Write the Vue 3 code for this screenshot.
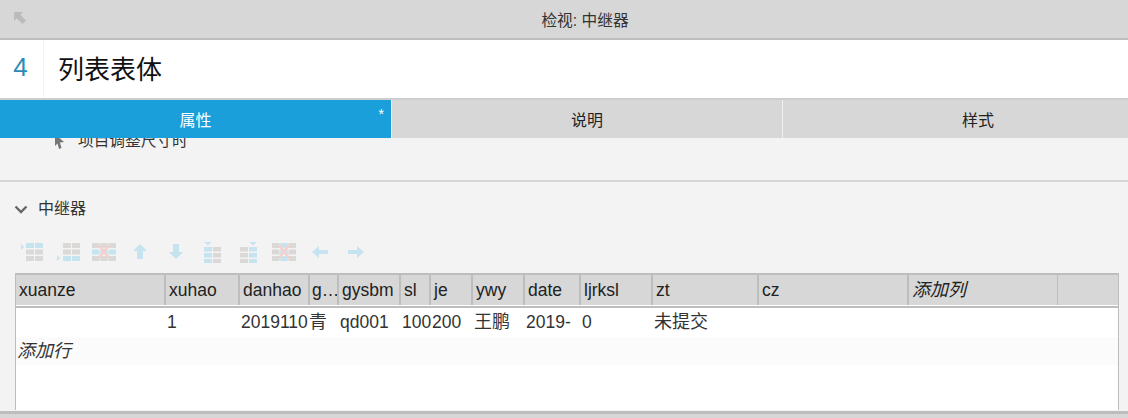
<script setup>
const G = '#dbd9d8', B = '#c6e3f0', R = '#f6cfcc'
const columns = [
  { name: 'xuanze', w: 150 }, { name: 'xuhao', w: 74 }, { name: 'danhao', w: 70 },
  { name: 'g…', w: 29, tight: true }, { name: 'gysbm', w: 62 }, { name: 'sl', w: 30 },
  { name: 'je', w: 42 }, { name: 'ywy', w: 52 }, { name: 'date', w: 56 },
  { name: 'ljrksl', w: 72 }, { name: 'zt', w: 106 }, { name: 'cz', w: 150 },
  { name: '添加列', w: 149, italic: true }, { name: '', w: 60 }
]
const gridStyle = { gridTemplateColumns: columns.map(c => c.w + 'px').join(' ') }
const row = [
  { v: '' }, { v: '1' }, { v: '2019110' }, { v: '青', cjk: true, flush: true }, { v: 'qd001' },
  { v: '100' }, { v: '200' }, { v: '王鹏', cjk: true }, { v: '2019-' }, { v: '0' },
  { v: '未提交', cjk: true }, { v: '' }, { v: '' }, { v: '' }
]

const grid = (xs, ys, w, h, fill) => {
  const cells = []
  ys.forEach((y, r) => xs.forEach((x, c) => cells.push({ x, y, w, h, f: fill(r, c) })))
  return cells
}
const two = [6, 15]
const tall = [2, 8.5, 15]
const wide = [0, 8.25, 16.5]
const lower = [6, 12, 18]
const icons = [
  { cells: grid(two, tall, 8, 5, r => (r === 0 ? B : G)), tri: 'M1 3l3 3-3 3z' },
  { cells: grid([7, 16], tall, 8, 5, r => (r === 2 ? B : G)), tri: 'M1 14l3 3-3 3z' },
  { cells: grid(wide, tall, 7.500, 5, r => (r === 1 ? B : G)), x: true },
  { arrow: 'M12 3l7 7h-4v8H9v-8H5z' },
  { arrow: 'M9 3h6v8h4l-7 7-7-7h4z' },
  { cells: grid([4, 13], lower, 8, 4.500, (r, c) => (c === 0 ? B : G)), tri: 'M4.500 1h7L8 4.500z' },
  { cells: grid([4, 13], lower, 8, 4.500, (r, c) => (c === 1 ? B : G)), tri: 'M13.500 1h7L17 4.500z' },
  { cells: grid(wide, tall, 7.500, 5, (r, c) => (c === 1 ? B : G)), x: true },
  { arrow: 'M4 11l7-6v4h9v4h-9v4z' },
  { arrow: 'M20 11l-7-6v4H4v4h9v4z' }
]
</script>

<template>
  <div class="panel">
    <header class="topbar">
      <svg class="back" width="14" height="14" viewBox="0 0 14 14"><path d="M1 1h9L7.300 3.700 13 9.500 9.500 13 3.700 7.300 1 10z" fill="#bbb" /></svg>
      <span class="topbar-title">检视: 中继器</span>
    </header>

    <div class="name-row">
      <div class="index">4</div>
      <div class="name">列表表体</div>
    </div>

    <nav class="tabs">
      <div class="tab active">属性<span class="star">*</span></div>
      <div class="tab">说明</div>
      <div class="tab">样式</div>
    </nav>

    <main class="content">
      <div class="clipped-row">
        <svg width="11" height="15" viewBox="0 0 11 15"><path d="M1 0l9 8-4 .5 1.500 5.500-2.500 1-1.500-5.500L1 12z" fill="#777" /></svg>
        <span>项目调整尺寸时</span>
      </div>

      <div class="section-head">
        <svg width="14" height="9" viewBox="0 0 14 9"><path d="M1.500 1.500L7 7l5.500-5.500" fill="none" stroke="#666" stroke-width="2.400" /></svg>
        <span>中继器</span>
      </div>

      <div class="toolbar">
        <svg v-for="(icon, i) in icons" :key="i" width="24" height="22" viewBox="0 0 24 22">
          <rect v-for="(c, j) in icon.cells" :key="j" :x="c.x" :y="c.y" :width="c.w" :height="c.h" :fill="c.f" />
          <path v-if="icon.tri" :d="icon.tri" :fill="B" />
          <path v-if="icon.arrow" :d="icon.arrow" :fill="B" />
          <path v-if="icon.x" d="M7 4l10 13M17 4L7 17" :stroke="R" stroke-width="2.500" />
        </svg>
      </div>

      <div class="table">
        <div class="thead" :style="gridStyle">
          <div v-for="c in columns" :key="c.name" class="th" :class="{ italic: c.italic, tight: c.tight }">{{ c.name }}</div>
        </div>
        <div class="tbody">
          <div class="tr" :style="gridStyle">
            <div v-for="(c, i) in row" :key="i" class="td" :class="{ cjk: c.cjk, flush: c.flush }">{{ c.v }}</div>
          </div>
          <div class="tr add">添加行</div>
        </div>
      </div>
    </main>

    <footer class="bottom"></footer>
  </div>
</template>

<style scoped>
.panel {
  width: 1128px;
  height: 418px;
  display: flex;
  flex-direction: column;
  overflow: hidden;
  background: #f3f3f3;
  font-family: "Liberation Sans", "Noto Sans CJK SC", sans-serif;
  color: #222;
}
.topbar {
  flex: none;
  height: 38px;
  display: flex;
  align-items: center;
  justify-content: center;
  background: #d7d7d7;
  border-bottom: 2px solid #bdbdbd;
  position: relative;
  padding-left: 42px;
}
.back {
  position: absolute;
  left: 13px;
  top: 11px;
}
.topbar-title {
  font-size: 15.7px;
  color: #333;
}
.name-row {
  flex: none;
  height: 58px;
  display: flex;
  background: #fff;
  border-bottom: 2px solid #cdcdcd;
}
.index {
  width: 41px;
  padding: 0 2px 4px 0;
  display: flex;
  align-items: center;
  justify-content: center;
  font-size: 26px;
  color: #2a8cb6;
  border-right: 1px solid #f4f4f4;
}
.name {
  padding: 0 0 4px 14px;
  display: flex;
  align-items: center;
  font-size: 26px;
  color: #111;
}
.tabs {
  flex: none;
  width: 1173px;
  height: 38px;
  display: grid;
  grid-template-columns: 391px 390px 390px;
  gap: 1px;
  background: #f0f0f0;
}
.tab {
  position: relative;
  display: flex;
  align-items: center;
  justify-content: center;
  background: #d7d7d7;
  font-size: 16px;
  color: #222;
}
.tab.active {
  background: #1a9fda;
  color: #fff;
}
.star {
  position: absolute;
  right: 7px;
  top: 6px;
  font-size: 14px;
  line-height: 16px;
}
.content {
  flex: 1;
  min-height: 0;
  overflow: hidden;
  padding: 0 9px 0 15px;
}
.clipped-row {
  height: 42px;
  margin: -7px -9px 0 -15px;
  padding: 0 0 0 54px;
  display: flex;
  align-items: flex-start;
  gap: 13px;
  font-size: 15.7px;
  line-height: 20px;
  color: #333;
}
.clipped-row svg {
  margin-top: 3px;
}
.section-head {
  margin: 7px -9px 0 -15px;
  padding: 17px 0 0 14px;
  height: 35px;
  display: flex;
  align-items: flex-start;
  gap: 10px;
  font-size: 16px;
  line-height: 20px;
  color: #333;
  border-top: 2px solid #d6d6d6;
}
.section-head svg {
  margin-top: 6px;
}
.toolbar {
  height: 43px;
  margin: -4px 0 0 -1px;
  display: grid;
  grid-template-columns: repeat(10, 36px);
  justify-items: center;
  align-items: center;
}
.toolbar svg {
  filter: blur(0.4px);
}
.table {
  width: 1104px;
  height: 137px;
  box-sizing: border-box;
  border: 1px solid #bdbdbd;
  border-width: 1px 1px 0 1px;
  background: #fff;
}
.thead {
  display: grid;
  height: 30px;
  background: #d7d7d7;
  border-top: 1px solid #bdbdbd;
}
.th {
  box-sizing: border-box;
  border-right: 2px solid #bdbdbd;
  padding-left: 3px;
  font-size: 17.5px;
  line-height: 30px;
  white-space: nowrap;
  overflow: hidden;
  color: #222;
}
.th:nth-last-child(2) {
  border-right-width: 1px;
}
.th:last-child {
  border-right: 0;
}
.th.tight {
  padding-left: 2px;
}
.th.italic {
  font-style: italic;
  font-size: 18px;
}
.tbody {
  margin-top: 1px;
  border-top: 2px solid #bdbdbd;
}
.tr {
  display: grid;
  height: 29px;
  font-size: 17.5px;
  line-height: 29px;
  color: #333;
}
.td {
  padding-left: 1px;
  white-space: nowrap;
  overflow: hidden;
}
.td.cjk {
  font-size: 18px;
}
.td.flush {
  padding-left: 0;
  margin-left: -1px;
}
.add {
  display: block;
  height: 28px;
  padding-left: 1px;
  background: #fbfbfb;
  font-style: italic;
  font-size: 18px;
  line-height: 28px;
}
.bottom {
  flex: none;
  height: 4px;
  background: #d7d7d7;
  border-top: 3px solid #bdbdbd;
}
</style>
